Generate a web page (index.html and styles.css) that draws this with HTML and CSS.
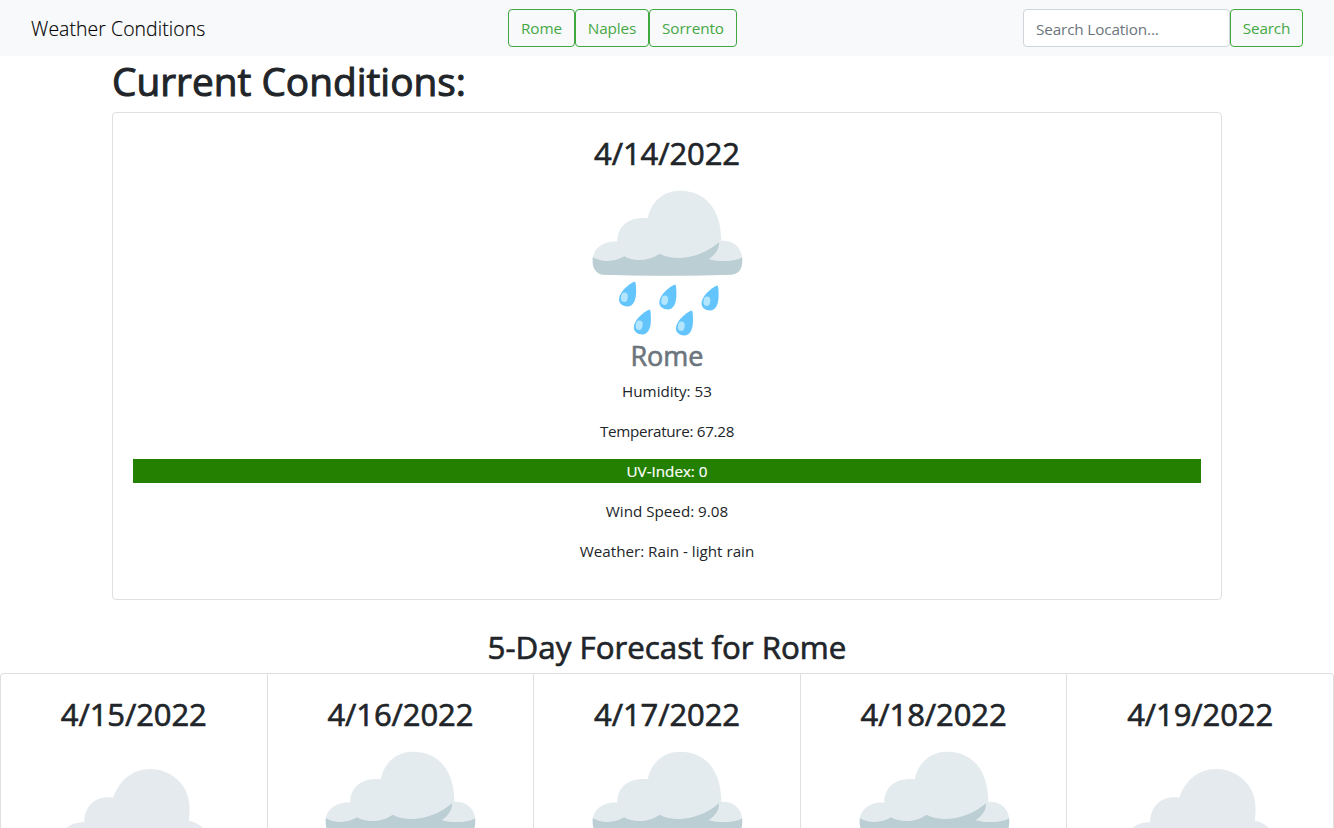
FILE: index.html
```html
<!DOCTYPE html>
<html lang="en">
<head>
<meta charset="utf-8">
<title>Weather Conditions</title>
<link rel="stylesheet" href="styles.css">
</head>
<body>
<svg class="defs" aria-hidden="true">
  <symbol id="drop" viewBox="-16 0 18 26" overflow="visible">
    <path fill="#64c5fd" d="M0 0C-7 3-15.7 11-15.7 18C-15.7 22-12 25-7.3 25C-1 25 1.4 18 1.4 10C1.4 4 1 0 0 0Z"/>
    <ellipse fill="#b3e5fc" cx="-10.3" cy="15.8" rx="3.4" ry="4.7" transform="rotate(8 -10.3 15.8)"/>
  </symbol>
  <symbol id="rain" viewBox="0 0 160 158.4">
    <path fill="#e4ebee" d="M5.7 80C5.7 68 17 60.5 30.3 61.5C30.3 45 43 36.5 60.7 38.3C64 22 76 10.7 93 10.7C119 10.7 134.3 30 134.3 60.8C147 60.3 155.3 68 155.3 80C155 90 151 94.7 143 94.7Q80 97 16.3 94.7C9 94 5.7 88 5.7 80Z"/>
    <path fill="#bbced3" d="M5.7 77.3C15 82.5 28 82 37.3 76.3C46 82 62 81.500 72.700 73.700C88 82 113 78.500 132 62.300C132.500 70 127 75.500 121.700 79.200C132 82 146 82 155.200 77.500V82C155 90 151 94.700 143 94.700Q80 97 16.300 94.700C9 94 5.700 88 5.700 82Z"/>
    <use href="#drop" x="31.7" y="101.4" width="18" height="26"/>
    <use href="#drop" x="72" y="104.4" width="18" height="26"/>
    <use href="#drop" x="114.200" y="105.400" width="18" height="26"/>
    <use href="#drop" x="46.500" y="129.400" width="18" height="26"/>
    <use href="#drop" x="88.600" y="130.400" width="18" height="26"/>
  </symbol>
  <symbol id="cloud" viewBox="0 0 160 158.4">
    <path fill="#e5eaee" d="M5 102C5 90 16 81 30.200 81.300C30.200 64 43 54 59.200 56.700C65 40 78 28 96.500 28C114 28 135 41 135.500 66C135.700 71 135.400 75 134.800 79.700C147 82 155 91 155 102C155 114 148 119 138 119H22C12 119 5 113 5 102Z"/>
  </symbol>
</svg>

<nav class="navbar">
  <a class="brand"><span>Weather Conditions</span></a>
  <div class="cities">
    <button class="btn rome">Rome</button><button class="btn naples">Naples</button><button class="btn sorrento">Sorrento</button>
  </div>
  <form class="search">
    <input class="field" type="text" placeholder="Search Location...">
    <button class="btn go" type="button">Search</button>
  </form>
</nav>

<main class="container">
  <h1 class="page-title">Current Conditions:</h1>
  <section class="card current">
    <h2 class="date">4/14/2022</h2>
    <svg class="icon"><use href="#rain"/></svg>
    <h3 class="city">Rome</h3>
    <p class="line">Humidity: 53</p>
    <p class="line temperature">Temperature: 67.28</p>
    <p class="line uv">UV-Index: 0</p>
    <p class="line">Wind Speed: 9.08</p>
    <p class="line">Weather: Rain - light rain</p>
  </section>
</main>

<h2 class="forecast-title">5-Day Forecast for Rome</h2>
<section class="group">
  <article class="card day"><h2 class="date">4/15/2022</h2><svg class="icon"><use href="#cloud"/></svg></article>
  <article class="card day"><h2 class="date">4/16/2022</h2><svg class="icon"><use href="#rain"/></svg></article>
  <article class="card day"><h2 class="date">4/17/2022</h2><svg class="icon"><use href="#rain"/></svg></article>
  <article class="card day"><h2 class="date">4/18/2022</h2><svg class="icon"><use href="#rain"/></svg></article>
  <article class="card day"><h2 class="date">4/19/2022</h2><svg class="icon"><use href="#cloud"/></svg></article>
</section>
</body>
</html>
```
FILE: styles.css
```css
* { box-sizing: border-box; }
body {
  margin: 0;
  height: 828px;
  overflow: hidden;
  background: #fff;
  color: #212529;
  font: 400 15px/24px "Open Sans", "Noto Sans", sans-serif;
}
h1, h2, h3, p { margin: 0; }
h1, h2, h3 { font-weight: 400; -webkit-text-stroke: 0.65px currentColor; }
.defs { display: none; }
.navbar {
  display: flex;
  justify-content: space-between;
  align-items: center;
  height: 56px;
  padding: 0 31px;
  background: #f8f9fa;
}
.brand {
  width: 190px;
  padding-top: 1px;
  font-size: 19.4px;
  line-height: 30px;
  font-weight: 300;
  letter-spacing: 0.08px;
  white-space: nowrap;
  color: #000;
  -webkit-text-stroke: 0.15px currentColor;
}
.cities, .search { display: flex; }
.btn {
  height: 38px;
  padding: 0 0 1px;
  border: 1px solid #3fa83f;
  border-radius: 4px;
  background: transparent;
  color: #45a845;
  font: 400 15.3px/24px "Open Sans", sans-serif;
}
.rome, .naples, .sorrento { padding-left: 1px; letter-spacing: -0.1px; }
.rome { width: 67px; }
.naples { width: 74px; }
.sorrento { width: 88px; }
.go { width: 73px; letter-spacing: -0.15px; }
.field {
  width: 207px;
  height: 38px;
  padding: 2px 12px 0;
  border: 1px solid #ced4da;
  border-radius: 4px;
  background: #fff;
  font: 400 15.3px/24px "Open Sans", sans-serif;
  letter-spacing: -0.15px;
}
.field::placeholder { color: #6c757d; opacity: 1; }
.container { width: 1110px; margin: 0 auto; }
.page-title { font-size: 38.8px; line-height: 48px; height: 56px; padding-top: 1px; -webkit-text-stroke-width: 1px; }
.card {
  display: flex;
  flex-direction: column;
  border: 1px solid #dfdfdf;
  border-radius: 4px;
  padding: 20px;
  text-align: center;
}
.current { height: 488px; }
.date { font-size: 31px; line-height: 38.4px; margin-bottom: 9px; padding-top: 1px; height: 38.4px; letter-spacing: -0.1px; }
.icon { display: block; flex: none; width: 160px; height: 158.4px; margin: 0 auto; }
.city { font-size: 27px; line-height: 33.6px; height: 33.6px; margin-bottom: 7px; color: #6c757d; }
.line { margin-bottom: 16px; font-size: 15.2px; }
.temperature { letter-spacing: -0.3px; }
.uv { background: #238000; color: #fff; -webkit-text-stroke: 0.2px currentColor; }
.forecast-title { margin: 27.6px 0 7px; font-size: 31.3px; line-height: 38.4px; text-align: center; }
.group { display: flex; height: 155px; }
.day { flex: 1 1 0; padding: 20px 0 0; border-radius: 0; border-bottom: 0; overflow: hidden; }
.day + .day { border-left: 0; }
.day:first-child { border-top-left-radius: 4px; }
.day:last-child { border-top-right-radius: 4px; }
```
